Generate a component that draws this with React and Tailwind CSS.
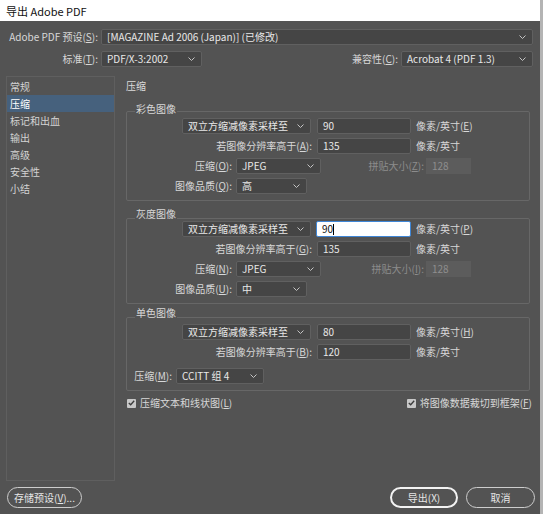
import React from "react";

function K({ children }) {
  return <span className="underline underline-offset-[1px]">{children}</span>;
}

function Chevron() {
  return (
    <svg width="7" height="4" viewBox="0 0 7 4" className="shrink-0">
      <path d="M0.5 0.5 L3.5 3.5 L6.5 0.5" fill="none" stroke="#c4c4c4" strokeWidth="1" />
    </svg>
  );
}

function Select({ className, children }) {
  return (
    <div
      className={`${className} h-[16px] flex items-center justify-between pl-[5px] pr-[6px] bg-[#454545] border border-[#606060] rounded-[2px] text-[#e8e8e8]`}
    >
      <span className="whitespace-nowrap leading-[14px]">{children}</span>
      <Chevron />
    </div>
  );
}

function Field({ className = "w-[94px]", children }) {
  return (
    <div
      className={`${className} h-[16px] flex items-center px-[5px] bg-[#454545] border border-[#606060] rounded-[2px] text-[#e8e8e8]`}
    >
      {children}
    </div>
  );
}

function Check() {
  return (
    <div className="w-[9px] h-[9px] shrink-0 bg-[#c8c8c8] rounded-[1px] flex items-center justify-center">
      <svg width="7" height="6" viewBox="0 0 7 6">
        <path d="M0.8 3 L2.7 4.8 L6.2 0.8" fill="none" stroke="#3b3b3b" strokeWidth="1.3" />
      </svg>
    </div>
  );
}

function Group({ title, legendClass, children, className }) {
  return (
    <div className={`${className} border border-[#676767] rounded-[2px] flex flex-col pb-[6px]`}>
      <div className={`${legendClass} ml-[8px] w-fit px-[1px] bg-[#535353] h-[14px] leading-[14px] text-[#d8d8d8]`}>
        {title}
      </div>
      {children}
    </div>
  );
}

function ResampleRows({ unitKey, aboveKey, val, above, focused }) {
  return (
    <>
      <div className="flex items-center h-[16px]">
        <Select className="ml-[55px] w-[129px]">双立方缩减像素采样至</Select>
        {focused ? (
          <div className="ml-[5px] w-[95px] h-[16px] flex items-center px-[5px] bg-white border border-[#3f86d6] rounded-[2px] text-[#111]">
            {val}
            <span className="w-px h-[11px] bg-black" />
          </div>
        ) : (
          <Field className="ml-[6px] w-[94px]">{val}</Field>
        )}
        <div className="ml-[5px] whitespace-nowrap">
          像素/英寸(<K>{unitKey}</K>)
        </div>
      </div>
      <div className="flex items-center h-[16px] mt-[4px]">
        <div className="w-[185px] text-right whitespace-nowrap">
          若图像分辨率高于(<K>{aboveKey}</K>):
        </div>
        <Field className="ml-[5px] w-[94px]">{above}</Field>
        <div className="ml-[5px]">像素/英寸</div>
      </div>
    </>
  );
}

function JpegRows({ compKey, tileKey, qualKey, quality }) {
  return (
    <>
      <div className="flex items-center h-[16px] mt-[4px]">
        <div className="w-[105px] text-right">
          压缩(<K>{compKey}</K>):
        </div>
        <Select className="ml-[4px] w-[85px]">JPEG</Select>
        <div className="ml-[47px] w-[58px] text-right pr-[2px] text-[#8c8c8c] whitespace-nowrap">
          拼贴大小(<K>{tileKey}</K>):
        </div>
        <div className="w-[45px] h-[16px] flex items-center px-[6px] bg-[#5c5c5c] text-[#8e8e8e]">128</div>
      </div>
      <div className="flex items-center h-[16px] mt-[4px]">
        <div className="w-[105px] text-right">
          图像品质(<K>{qualKey}</K>):
        </div>
        <Select className="ml-[4px] w-[71px]">{quality}</Select>
      </div>
    </>
  );
}

export default function App() {
  const nav = ["常规", "压缩", "标记和出血", "输出", "高级", "安全性", "小结"];

  return (
    <div className="w-[543px] h-[514px] flex flex-col bg-[#535353] border-r-[3px] border-[#b4b4b4] text-[10px] leading-[14px] text-[#d8d8d8] font-['Noto_Sans_CJK_SC','Noto_Sans',sans-serif] overflow-hidden">
      <div className="h-[21px] shrink-0 bg-white flex items-center pl-[6px] text-[11px] text-[#111]">
        导出 Adobe PDF
      </div>

      <div className="flex flex-col gap-[6px] pt-[8px] pr-[7px]">
        <div className="flex items-center h-[16px]">
          <div className="w-[98px] text-right whitespace-nowrap">
            Adobe PDF 预设(<K>S</K>):
          </div>
          <Select className="ml-[3px] flex-1">[MAGAZINE Ad 2006 (Japan)] (已修改)</Select>
        </div>
        <div className="flex items-center h-[16px]">
          <div className="w-[98px] text-right">
            标准(<K>T</K>):
          </div>
          <Select className="ml-[3px] w-[101px]">PDF/X-3:2002</Select>
          <div className="flex-1 text-right">
            兼容性(<K>C</K>):
          </div>
          <Select className="ml-[3px] w-[132px]">Acrobat 4 (PDF 1.3)</Select>
        </div>
      </div>

      <div className="flex mt-[9px] h-[405px] shrink-0">
        <div className="ml-[6px] w-[109px] border border-[#5f5f5f] pt-px">
          {nav.map((item) => (
            <div
              key={item}
              className={`h-[17px] flex items-center pl-[3px] ${
                item === "压缩" ? "bg-[#46617d] text-white" : "text-[#d4d4d4]"
              }`}
            >
              {item}
            </div>
          ))}
        </div>

        <div className="ml-[11px] w-[404px] flex flex-col">
          <div className="mt-[3px] h-[14px] text-[#dcdcdc]">压缩</div>

          <Group title="彩色图像" legendClass="-mt-[10px]" className="mt-[18px]">
            <div className="mt-[2px]" />
            <ResampleRows unitKey="E" aboveKey="A" val="90" above="135" />
            <JpegRows compKey="O" tileKey="Z" qualKey="Q" quality="高" />
          </Group>

          <Group title="灰度图像" legendClass="-mt-[12px]" className="mt-[17px]">
            <ResampleRows unitKey="P" aboveKey="G" val="90" above="135" focused />
            <JpegRows compKey="N" tileKey="I" qualKey="U" quality="中" />
          </Group>

          <Group title="单色图像" legendClass="-mt-[12px]" className="mt-[13px]">
            <div className="mt-[4px]" />
            <ResampleRows unitKey="H" aboveKey="B" val="80" above="120" />
            <div className="flex items-center h-[16px] mt-[8px]">
              <div className="w-[45px] text-right whitespace-nowrap">
                压缩(<K>M</K>):
              </div>
              <Select className="ml-[4px] w-[88px]">CCITT 组 4</Select>
            </div>
          </Group>

          <div className="flex items-center justify-between h-[14px] mt-[5px]">
            <div className="flex items-center gap-[4px] ml-px">
              <Check />
              <span>
                压缩文本和线状图(<K>L</K>)
              </span>
            </div>
            <div className="flex items-center gap-[4px] -mr-[2px]">
              <Check />
              <span>
                将图像数据裁切到框架(<K>F</K>)
              </span>
            </div>
          </div>
        </div>
      </div>

      <div className="flex items-center mt-[6px] h-[21px] pr-[5px]">
        <button className="ml-[7px] w-[75px] h-[21px] rounded-full border border-[#cdcdcd] text-[#e6e6e6] flex items-center justify-center whitespace-nowrap">
          存储预设(<K>V</K>)...
        </button>
        <button className="ml-auto w-[68px] h-[21px] rounded-full border-2 border-[#f2f2f2] text-[#e6e6e6] flex items-center justify-center">
          导出(X)
        </button>
        <button className="ml-[8px] w-[69px] h-[21px] rounded-full border border-[#cdcdcd] text-[#e6e6e6] flex items-center justify-center">
          取消
        </button>
      </div>
    </div>
  );
}
